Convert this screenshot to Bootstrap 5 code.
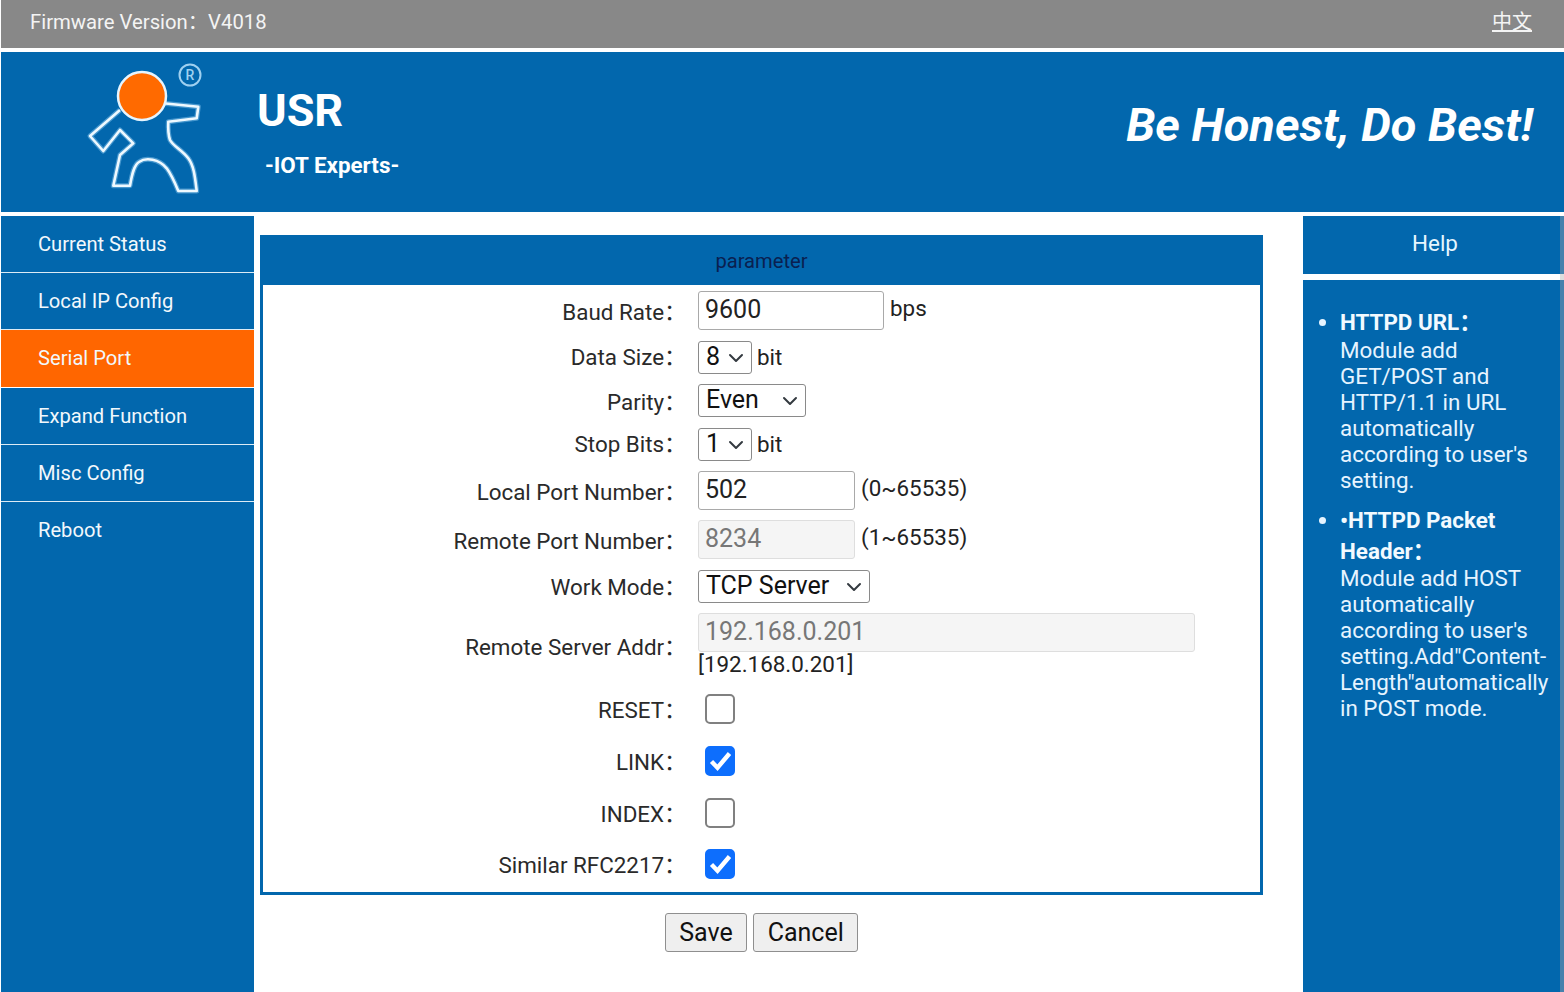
<!DOCTYPE html>
<html lang="en">
<head>
<meta charset="utf-8">
<title>USR</title>
<link href="https://cdn.jsdelivr.net/npm/bootstrap@5.3.0/dist/css/bootstrap.min.css" rel="stylesheet">
<style>
html,body{height:100%;overflow:hidden}
body{font-family:Roboto,"Noto Sans CJK SC",sans-serif;font-size:22.4px;color:#222;background:#fff;padding-left:1px}
.usr-page{height:992px}
.usr-top{height:48px;background:#888;color:#f4f4f4;font-size:20.3px;padding:0 32px 4px 29px}
.usr-top a{color:#f4f4f4;font-size:20px}
.usr-head{height:160px;margin-top:4px;background:#0267ad;color:#fff;padding-right:31px}
.usr-logo{width:257px;height:160px;flex:none}
.usr-brand{font-size:45px;font-weight:700;line-height:52px;margin-top:33px;margin-left:-1px}
.usr-sub{font-size:22.4px;font-weight:700;margin:15px 0 0 7px;line-height:26px}
.usr-motto{font-size:47px;font-weight:700;font-style:italic;line-height:56px;margin-top:45px}
.usr-body{margin-top:4px;height:776px}
.usr-side{width:253px;background:#0267ad;flex:none}
.usr-side .list-group-item{background:transparent;color:#f2f8fc;border:0;border-bottom:1px solid #dcebf5;border-radius:0;height:57px;margin-top:0;padding:0 0 0 37px;font-size:20.16px;display:flex;align-items:center}
.usr-side .list-group-item.active{background:#ff6600;border-bottom-color:#fff;height:58px;margin-top:0}
.usr-main{width:1049px;flex:none;padding:19px 0 0 6px}
.usr-panel{width:1003px;border:3px solid #0267ad;border-top:0;height:660px}
.usr-cap{height:50px;background:#0267ad;margin:0 -3px;color:#0a2050;font-size:20.16px;text-align:center;padding-top:14px;line-height:24px}
.usr-row{display:grid;grid-template-columns:423.5px 1fr;column-gap:11.5px;align-items:center}
.usr-row>label{text-align:right;line-height:26px;margin:0;padding-top:1px;color:#2a2a2a}
.usr-row>label.usr-dn{padding-top:3px}
.usr-row>label.usr-up{padding-top:0;padding-bottom:1px}
.usr-field{display:flex;align-items:center;gap:5px}
.usr-field .form-control{font-size:25px;line-height:30px;height:39px;padding:0 6px 2px;border:1px solid #a9a9a9;border-radius:3px;color:#222;flex:none}
.usr-field .form-control:disabled{background:#f5f5f5;color:#777;border-color:#dedede}
.usr-field .form-select{font-size:25px;line-height:28px;height:33px;padding:0 24px 1px 7px;border:1px solid #8a8a8a;border-radius:3px;color:#111;background-position:right 5px center;background-size:20px 16px;flex:none}
.usr-w1{width:186px!important}.usr-w2{width:157px!important}.usr-w3{width:497px!important}
.usr-s1{width:54px!important}.usr-s2{width:108px!important}.usr-s3{width:172px!important}
.usr-pad1{height:6px}
.usr-unit{line-height:26px;margin:-6px 0 0 1px}
.usr-h39{height:39px}.usr-h33{height:33px}
.usr-gap10{margin-top:10px}.usr-gap11{margin-top:11px}.usr-gap21{margin-top:21px}.usr-gap22{margin-top:22px}.usr-gap17{margin-top:17px}
.usr-h30{height:30px}
.usr-field .form-check-input{width:30px;height:30px;margin:0 0 0 7px;border:2px solid #808080;border-radius:5px}
.usr-field .form-check-input:checked{border-color:#0d6efd;background-origin:border-box;background-size:30px 30px;background-image:url("data:image/svg+xml,%3csvg xmlns='http://www.w3.org/2000/svg' viewBox='0 0 30 30'%3e%3cpath fill='none' stroke='%23fff' stroke-width='4.4' d='M6.5 15.5l6 6.2L24.5 7.5'/%3e%3c/svg%3e")}
.usr-addr{line-height:26px;margin-top:-1px}
.usr-btns{width:1003px;gap:6px;margin-top:18px}
.usr-btns .btn{font-size:25px;line-height:30px;height:39px;padding:0 13.5px;background:#efefef;border:1px solid #8f8f8f;border-radius:3px;color:#111}
.usr-help{width:261px;flex:none;position:relative}
.usr-help-title{height:58px;background:#0267ad;color:#e6f6ff;font-size:22.4px;text-align:center;line-height:54px;padding-left:3px;margin-bottom:6px}
.usr-help-body{background:#0267ad;height:712px;color:#e6f4ff;padding:28px 11px 0 0;line-height:26px}
.usr-help-body ul{margin:0;padding-left:37px}
.usr-help-body li{margin-bottom:11.5px}
.usr-help-body b{display:block;line-height:28px;font-weight:700;color:#f2faff;margin-bottom:1px}
.usr-help-body li+li b{line-height:31px;margin-bottom:-2px}
.usr-scroll{position:absolute;top:0;bottom:0;right:0;width:4px;background:rgba(170,170,170,.4)}
</style>
</head>
<body>
<div class="usr-page d-flex flex-column">
  <div class="usr-top d-flex justify-content-between align-items-center">
    <span>Firmware Version：V4018</span>
    <a href="#">中文</a>
  </div>
  <div class="usr-head d-flex align-items-start">
    <div class="usr-logo">
      <svg width="257" height="160" viewBox="0 0 257 160" role="img" aria-label="USR logo">
        <g fill="none" stroke-linejoin="round">
          <path d="M119 58 89 84 102.3 99 119 78 132.3 91.3 119 103 112.3 133.7 129 133.7C131 122 133 113 138 110 145 105 158 107 165.7 116.3 170 122 174 131 177.3 139L195.7 139C194 125 193 114 187.3 106.3 181 98 172 94 169 88 167 82 167 76 167.3 69.7L195.7 66.3 197.3 54.7 162.3 51.3" stroke="#7fc0ea" stroke-opacity=".55" stroke-width="5"/>
          <path d="M119 58 89 84 102.3 99 119 78 132.3 91.3 119 103 112.3 133.7 129 133.7C131 122 133 113 138 110 145 105 158 107 165.7 116.3 170 122 174 131 177.3 139L195.7 139C194 125 193 114 187.3 106.3 181 98 172 94 169 88 167 82 167 76 167.3 69.7L195.7 66.3 197.3 54.7 162.3 51.3" stroke="#eef9ff" stroke-width="2.6"/>
        </g>
        <circle cx="141" cy="44" r="24" fill="#ff6a00" stroke="#e6f5ff" stroke-width="2.5"/>
        <circle cx="189" cy="23" r="10.5" fill="none" stroke="#9fd0f0" stroke-width="2"/>
        <text x="189" y="28" font-size="14" font-family="Roboto,sans-serif" font-weight="500" text-anchor="middle" fill="#9fd0f0">R</text>
      </svg>
    </div>
    <div>
      <div class="usr-brand">USR</div>
      <div class="usr-sub">-IOT Experts-</div>
    </div>
    <div class="usr-motto ms-auto">Be Honest, Do Best!</div>
  </div>
  <div class="usr-body d-flex">
    <nav class="usr-side">
      <div class="list-group list-group-flush">
        <a href="#" class="list-group-item">Current Status</a>
        <a href="#" class="list-group-item">Local IP Config</a>
        <a href="#" class="list-group-item active">Serial Port</a>
        <a href="#" class="list-group-item">Expand Function</a>
        <a href="#" class="list-group-item">Misc Config</a>
        <a href="#" class="list-group-item">Reboot</a>
      </div>
    </nav>
    <main class="usr-main">
      <div class="usr-panel">
        <div class="usr-cap">parameter</div>
        <div class="usr-pad1"></div>
        <div class="usr-row usr-h39"><label class="usr-dn">Baud Rate：</label><div class="usr-field"><input class="form-control usr-w1" value="9600"><span class="usr-unit">bps</span></div></div>
        <div class="usr-row usr-h33 usr-gap11"><label class="usr-up">Data Size：</label><div class="usr-field"><select class="form-select usr-s1"><option>8</option></select><span>bit</span></div></div>
        <div class="usr-row usr-h33 usr-gap10"><label class="usr-dn">Parity：</label><div class="usr-field"><select class="form-select usr-s2"><option>Even</option></select></div></div>
        <div class="usr-row usr-h33 usr-gap11"><label class="usr-up">Stop Bits：</label><div class="usr-field"><select class="form-select usr-s1"><option>1</option></select><span>bit</span></div></div>
        <div class="usr-row usr-h39 usr-gap10"><label class="usr-dn">Local Port Number：</label><div class="usr-field"><input class="form-control usr-w2" value="502"><span class="usr-unit">(0~65535)</span></div></div>
        <div class="usr-row usr-h39 usr-gap10"><label class="usr-dn">Remote Port Number：</label><div class="usr-field"><input class="form-control usr-w2" value="8234" disabled><span class="usr-unit">(1~65535)</span></div></div>
        <div class="usr-row usr-h33 usr-gap11"><label>Work Mode：</label><div class="usr-field"><select class="form-select usr-s3"><option>TCP Server</option></select></div></div>
        <div class="usr-row usr-gap10"><label class="usr-dn">Remote Server Addr：</label><div><div class="usr-field"><input class="form-control usr-w3" value="192.168.0.201" disabled></div><div class="usr-addr">[192.168.0.201]</div></div></div>
        <div class="usr-row usr-h30 usr-gap17"><label>RESET：</label><div class="usr-field"><input class="form-check-input" type="checkbox"></div></div>
        <div class="usr-row usr-h30 usr-gap22"><label>LINK：</label><div class="usr-field"><input class="form-check-input" type="checkbox" checked></div></div>
        <div class="usr-row usr-h30 usr-gap22"><label>INDEX：</label><div class="usr-field"><input class="form-check-input" type="checkbox"></div></div>
        <div class="usr-row usr-h30 usr-gap21"><label>Similar RFC2217：</label><div class="usr-field"><input class="form-check-input" type="checkbox" checked></div></div>
      </div>
      <div class="usr-btns d-flex justify-content-center">
        <button type="button" class="btn">Save</button>
        <button type="button" class="btn">Cancel</button>
      </div>
    </main>
    <aside class="usr-help">
      <div class="usr-help-title">Help</div>
      <div class="usr-help-body">
        <ul>
          <li><b>HTTPD URL：</b>Module add GET/POST and HTTP/1.1 in URL automatically according to user's setting.</li>
          <li><b>•HTTPD Packet Header：</b>Module add HOST automatically according to user's setting.Add"Content-Length"automatically in POST mode.</li>
        </ul>
      </div>
      <div class="usr-scroll"></div>
    </aside>
  </div>
</div>
<script src="https://cdn.jsdelivr.net/npm/bootstrap@5.3.0/dist/js/bootstrap.bundle.min.js"></script>
</body>
</html>
